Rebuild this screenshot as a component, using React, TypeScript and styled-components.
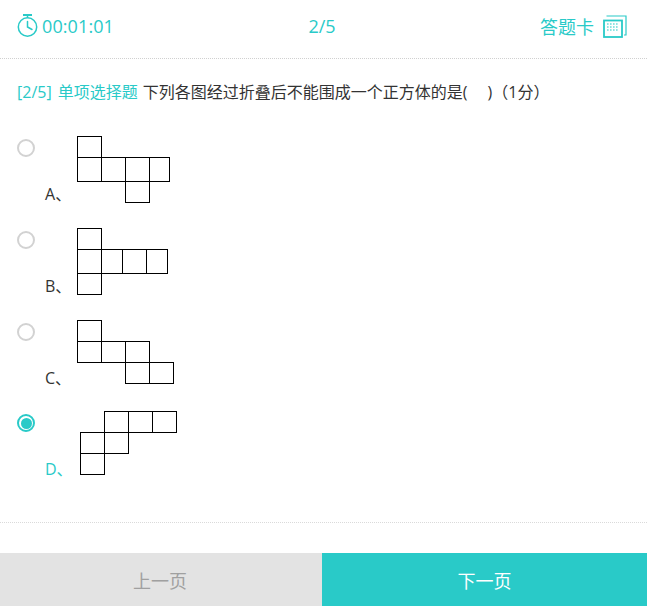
import * as React from 'react';
import styled, { createGlobalStyle } from 'styled-components';

const TEAL = '#29cac8';

type Rect = [number, number, number, number];

type Option = {
  key: string;
  height: number;
  checked?: boolean;
  cells: Rect[];
};

const OPTIONS: Option[] = [
  {
    key: 'A',
    height: 92,
    cells: [
      [0, 1, 24, 22],
      [0, 22, 24, 46],
      [24, 22, 48, 46],
      [48, 22, 72, 46],
      [72, 22, 92, 46],
      [48, 46, 72, 67],
    ],
  },
  {
    key: 'B',
    height: 92,
    cells: [
      [0, 1, 24, 22],
      [0, 22, 24, 46],
      [24, 22, 45, 46],
      [45, 22, 69, 46],
      [69, 22, 90, 46],
      [0, 46, 24, 67],
    ],
  },
  {
    key: 'C',
    height: 91,
    cells: [
      [0, 1, 24, 22],
      [0, 22, 24, 43],
      [24, 22, 48, 43],
      [48, 22, 72, 43],
      [48, 43, 72, 64],
      [72, 43, 96, 64],
    ],
  },
  {
    key: 'D',
    height: 92,
    checked: true,
    cells: [
      [27, 1, 51, 22],
      [51, 1, 75, 22],
      [75, 1, 99, 22],
      [3, 22, 27, 43],
      [27, 22, 51, 43],
      [3, 43, 27, 64],
    ],
  },
];

function TimerIcon() {
  return (
    <svg width="22" height="24" viewBox="0 0 22 24" fill="none" stroke={TEAL} strokeWidth="1.5">
      <path d="M6 1h9" strokeWidth="2" />
      <path d="M10.5 1v3" />
      <circle cx="10.5" cy="13" r="9.2" />
      <path d="M10.5 7.5V13l4.5 2.5" strokeLinecap="round" />
    </svg>
  );
}

function CardIcon() {
  return (
    <svg width="24" height="23" viewBox="0 0 24 23" fill="none" stroke={TEAL}>
      <path d="M3.5 1h19.5v19h-2" strokeWidth="1.2" />
      <rect x="1" y="5.5" width="18" height="16.5" strokeWidth="1.8" />
      <path d="M4 9h12M4 12h12M4 15h12" strokeWidth="1.4" strokeDasharray="1.6 1.4" opacity="0.7" />
    </svg>
  );
}

function Figure({ cells }: { cells: Rect[] }) {
  return (
    <FigureSvg width="101" height="69" viewBox="0 0 101 69">
      {cells.map(([x0, y0, x1, y1]) => (
        <rect
          key={`${x0}-${y0}`}
          x={x0 + 0.5}
          y={y0 + 0.5}
          width={x1 - x0}
          height={y1 - y0}
          fill="none"
          stroke="#000"
          strokeWidth="1"
        />
      ))}
    </FigureSvg>
  );
}

export default function App() {
  return (
    <Page>
      <GlobalStyle />
      <Header>
        <Timer>
          <TimerIcon />
          <span>00:01:01</span>
        </Timer>
        <Progress>2/5</Progress>
        <AnswerCard>
          <span>答题卡</span>
          <CardIcon />
        </AnswerCard>
      </Header>

      <Question>
        <QuestionTag>[2/5] 单项选择题</QuestionTag>
        <span>下列各图经过折叠后不能围成一个正方体的是(</span>
        <AnswerBlank />
        <span>)（1分）</span>
      </Question>

      <OptionList>
        {OPTIONS.map((option) => (
          <OptionRow key={option.key} $height={option.height}>
            <Radio $checked={!!option.checked} />
            <OptionLabel $checked={!!option.checked}>{option.key}、</OptionLabel>
            <Figure cells={option.cells} />
          </OptionRow>
        ))}
      </OptionList>

      <Divider />

      <Footer>
        <PrevButton>上一页</PrevButton>
        <NextButton>下一页</NextButton>
      </Footer>
    </Page>
  );
}

const GlobalStyle = createGlobalStyle`
  html, body {
    margin: 0;
    padding: 0;
    background: #fff;
  }
`;

const Page = styled.div`
  width: 647px;
  height: 606px;
  display: flex;
  flex-direction: column;
  overflow: hidden;
  font-family: 'Open Sans', 'Noto Sans CJK SC', sans-serif;
  color: #333;
`;

const Header = styled.header`
  height: 52px;
  display: grid;
  grid-template-columns: 1fr auto 1fr;
  align-items: center;
  padding: 0 20px 6px 17px;
  box-sizing: content-box;
  border-bottom: 1px dotted #d0d0d0;
  font-size: 18px;
  color: ${TEAL};
`;

const Timer = styled.div`
  display: flex;
  align-items: center;
  gap: 3px;
  letter-spacing: 0.1px;
`;

const Progress = styled.div`
  text-align: center;
`;

const AnswerCard = styled.div`
  display: flex;
  align-items: center;
  justify-content: flex-end;
  gap: 9px;
`;

const Question = styled.div`
  height: 76px;
  padding: 21px 0 0 17px;
  box-sizing: border-box;
  display: flex;
  font-size: 16px;
  line-height: 24px;
  white-space: pre;
`;

const QuestionTag = styled.span`
  color: ${TEAL};
  margin-right: 5px;
  word-spacing: 2px;
`;

const AnswerBlank = styled.span`
  width: 20px;
`;

const OptionList = styled.div`
  display: flex;
  flex-direction: column;
  padding-left: 17px;
  height: 387px;
`;

const OptionRow = styled.label<{ $height: number }>`
  display: flex;
  align-items: flex-start;
  height: ${(p) => p.$height}px;
`;

const Radio = styled.span<{ $checked: boolean }>`
  position: relative;
  flex: none;
  width: 18px;
  height: 18px;
  margin-top: 4px;
  box-sizing: border-box;
  border-radius: 50%;
  border: 2px solid ${(p) => (p.$checked ? TEAL : '#d2d2d2')};

  &::after {
    content: '';
    display: ${(p) => (p.$checked ? 'block' : 'none')};
    position: absolute;
    inset: 1.5px;
    border-radius: 50%;
    background: ${TEAL};
  }
`;

const OptionLabel = styled.span<{ $checked: boolean }>`
  width: 32px;
  margin: 48px 0 0 10px;
  font-size: 16px;
  line-height: 22px;
  color: ${(p) => (p.$checked ? TEAL : '#333')};
`;

const FigureSvg = styled.svg`
  flex: none;
  display: block;
`;

const Divider = styled.div`
  border-top: 1px dotted #dadada;
  height: 30px;
`;

const Footer = styled.footer`
  height: 53px;
  display: flex;
  font-size: 18px;
`;

const PrevButton = styled.div`
  flex: 0 0 322px;
  display: flex;
  align-items: center;
  justify-content: center;
  padding-right: 2px;
  box-sizing: border-box;
  background: #e3e3e3;
  color: #a0a0a0;
`;

const NextButton = styled.div`
  flex: 1;
  display: flex;
  align-items: center;
  justify-content: center;
  background: ${TEAL};
  color: #fff;
`;
